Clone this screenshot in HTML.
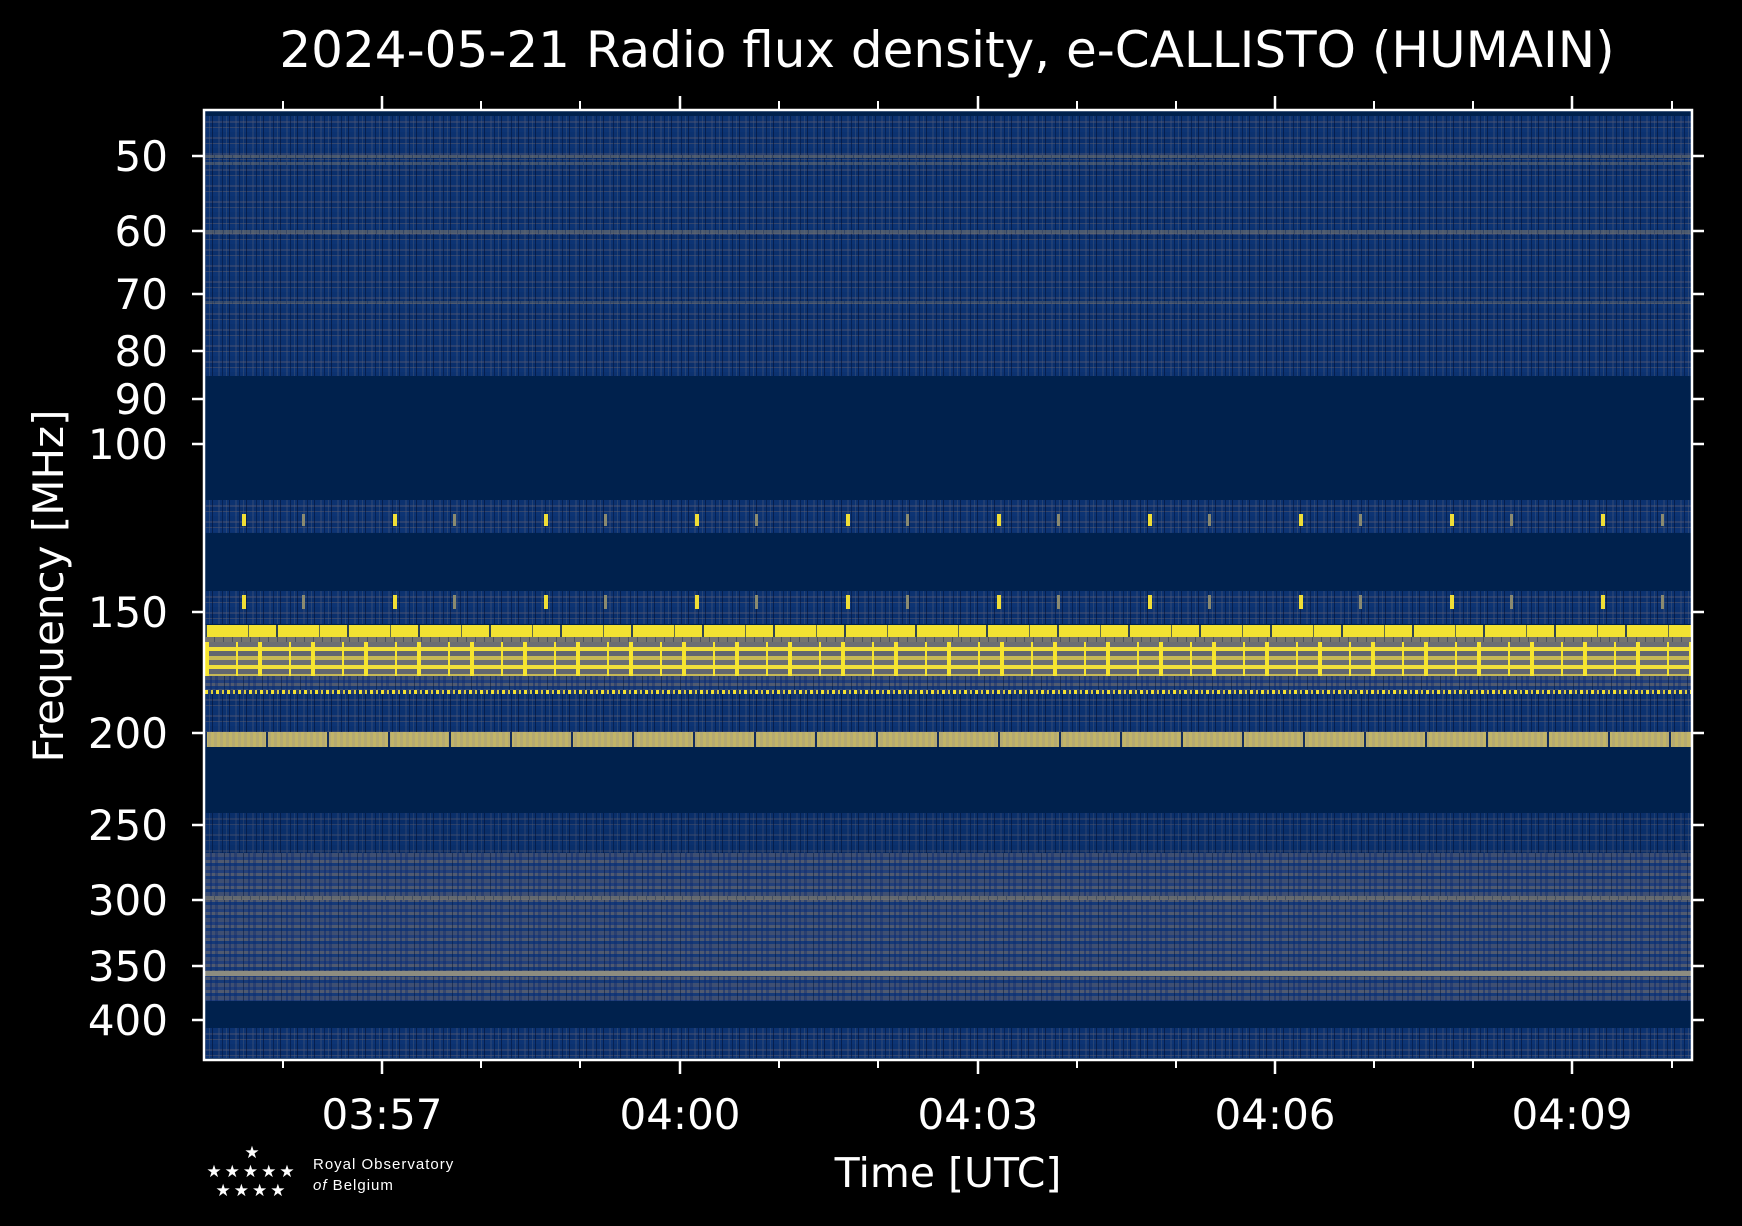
<!DOCTYPE html>
<html><head><meta charset="utf-8"><style>
html,body{margin:0;padding:0;background:#000;}
body{width:1742px;height:1226px;position:relative;overflow:hidden;font-family:"DejaVu Sans","Liberation Sans",sans-serif;color:#fff;}
.plot{position:absolute;left:205px;top:111px;width:1487px;height:949px;background:#00214d;overflow:hidden;}
.b{position:absolute;left:0;width:100%;}
.n{background:
 repeating-linear-gradient(90deg,rgba(0,20,60,.55) 0 1px,transparent 1px 4px,rgba(90,100,120,.35) 4px 5px,transparent 5px 7px,rgba(0,10,40,.5) 7px 8px,transparent 8px 13px,rgba(80,90,120,.3) 13px 15px,transparent 15px 17px),
 repeating-linear-gradient(180deg,#0c3270 0 5px,#2a4170 5px 7px,#0a2f6c 7px 11px,#33466e 11px 12px,#0d3474 12px 16px);}
.g{background:
 repeating-linear-gradient(90deg,rgba(0,20,60,.5) 0 1px,transparent 1px 5px,rgba(10,40,110,.5) 5px 7px,transparent 7px 10px,rgba(10,40,110,.4) 10px 13px,transparent 13px 19px),
 repeating-linear-gradient(180deg,#3f4f72 0 4px,#23407a 4px 7px,#505a70 7px 10px,#163a78 10px 13px);}
.lg{background:repeating-linear-gradient(90deg,rgba(0,20,60,.35) 0 1px,transparent 1px 9px),#757570;}
.y{background:repeating-linear-gradient(90deg,rgba(0,30,90,.8) 0 2px,transparent 2px 43px,rgba(0,30,90,.6) 43px 44px,transparent 44px 71px),#f2e232;}
.yg{background:repeating-linear-gradient(90deg,#f7e52e 0 4px,transparent 4px 31px,#f7e52e 31px 33px,transparent 33px 53px),repeating-linear-gradient(180deg,#6b6e73 0 5px,#f0df3a 5px 9px,#62666f 9px 14px,#c6b856 14px 18px);}
.ys{background:repeating-linear-gradient(90deg,rgba(0,30,90,.9) 0 2px,transparent 2px 61px),repeating-linear-gradient(90deg,#c1b468 0 3px,#b5aa72 3px 6px);}
.spk{background:repeating-linear-gradient(90deg,transparent 0 37px,#f0de36 37px 41px,transparent 41px 97px,#8a8a70 97px 100px,transparent 100px 151px);}
.ydot{background:repeating-linear-gradient(90deg,#f2e232 0 3px,#2b3f6e 3px 6px,#d8cc40 6px 8px,#102f6c 8px 11px);}
</style></head><body>

<div class="plot">
 <div class="b n" style="top:5px;height:260px;"></div>
 <div class="b lg" style="top:44px;height:3px;opacity:.6"></div>
 <div class="b lg" style="top:51px;height:3px;opacity:.5"></div>
 <div class="b lg" style="top:119px;height:4px;opacity:.6"></div>
 <div class="b lg" style="top:190px;height:3px;opacity:.4"></div>
 <div class="b n" style="top:389px;height:33px;"></div>
 <div class="b spk" style="top:403px;height:12px;"></div>
 <div class="b n" style="top:480px;height:33px;"></div>
 <div class="b spk" style="top:484px;height:14px;"></div>
 <div class="b y" style="top:514px;height:12px;"></div>
 <div class="b lg" style="top:526px;height:5px;"></div>
 <div class="b yg" style="top:531px;height:34px;"></div>
 <div class="b g" style="top:565px;height:15px;"></div>
 <div class="b ydot" style="top:579px;height:4px;"></div>
 <div class="b n" style="top:583px;height:38px;"></div>
 <div class="b ys" style="top:621px;height:15px;"></div>
 <div class="b n" style="top:702px;height:40px;opacity:.85"></div>
 <div class="b g" style="top:742px;height:148px;"></div>
 <div class="b lg" style="top:785px;height:4px;opacity:.8"></div>
 <div class="b lg" style="top:860px;height:5px;background:#8d8c80"></div>
 <div class="b n" style="top:917px;height:30px;"></div>
</div>

<svg width="1742" height="1226" style="position:absolute;left:0;top:0" stroke="#fff" stroke-width="2.5" fill="none">
 <text x="947" y="67" fill="#fff" stroke="none" font-family="DejaVu Sans, Liberation Sans, sans-serif" font-size="50" text-anchor="middle">2024-05-21 Radio flux density, e-CALLISTO (HUMAIN)</text>
 <rect x="204" y="110" width="1488" height="950"/>
 <g>
  <line x1="192" y1="156" x2="204" y2="156"/><line x1="1692" y1="156" x2="1704" y2="156"/>
  <line x1="192" y1="231" x2="204" y2="231"/><line x1="1692" y1="231" x2="1704" y2="231"/>
  <line x1="192" y1="294" x2="204" y2="294"/><line x1="1692" y1="294" x2="1704" y2="294"/>
  <line x1="192" y1="351" x2="204" y2="351"/><line x1="1692" y1="351" x2="1704" y2="351"/>
  <line x1="192" y1="399" x2="204" y2="399"/><line x1="1692" y1="399" x2="1704" y2="399"/>
  <line x1="192" y1="444" x2="204" y2="444"/><line x1="1692" y1="444" x2="1704" y2="444"/>
  <line x1="192" y1="612" x2="204" y2="612"/><line x1="1692" y1="612" x2="1704" y2="612"/>
  <line x1="192" y1="733" x2="204" y2="733"/><line x1="1692" y1="733" x2="1704" y2="733"/>
  <line x1="192" y1="825" x2="204" y2="825"/><line x1="1692" y1="825" x2="1704" y2="825"/>
  <line x1="192" y1="900" x2="204" y2="900"/><line x1="1692" y1="900" x2="1704" y2="900"/>
  <line x1="192" y1="966" x2="204" y2="966"/><line x1="1692" y1="966" x2="1704" y2="966"/>
  <line x1="192" y1="1020" x2="204" y2="1020"/><line x1="1692" y1="1020" x2="1704" y2="1020"/>
 </g>
 <g>
  <line x1="382" y1="1060" x2="382" y2="1074"/><line x1="382" y1="96" x2="382" y2="110"/>
  <line x1="680" y1="1060" x2="680" y2="1074"/><line x1="680" y1="96" x2="680" y2="110"/>
  <line x1="978" y1="1060" x2="978" y2="1074"/><line x1="978" y1="96" x2="978" y2="110"/>
  <line x1="1275" y1="1060" x2="1275" y2="1074"/><line x1="1275" y1="96" x2="1275" y2="110"/>
  <line x1="1572" y1="1060" x2="1572" y2="1074"/><line x1="1572" y1="96" x2="1572" y2="110"/>
  <g stroke-width="2">
  <line x1="283" y1="1060" x2="283" y2="1068"/><line x1="283" y1="101" x2="283" y2="110"/>
  <line x1="481" y1="1060" x2="481" y2="1068"/><line x1="481" y1="101" x2="481" y2="110"/>
  <line x1="580" y1="1060" x2="580" y2="1068"/><line x1="580" y1="101" x2="580" y2="110"/>
  <line x1="779" y1="1060" x2="779" y2="1068"/><line x1="779" y1="101" x2="779" y2="110"/>
  <line x1="878" y1="1060" x2="878" y2="1068"/><line x1="878" y1="101" x2="878" y2="110"/>
  <line x1="1077" y1="1060" x2="1077" y2="1068"/><line x1="1077" y1="101" x2="1077" y2="110"/>
  <line x1="1176" y1="1060" x2="1176" y2="1068"/><line x1="1176" y1="101" x2="1176" y2="110"/>
  <line x1="1374" y1="1060" x2="1374" y2="1068"/><line x1="1374" y1="101" x2="1374" y2="110"/>
  <line x1="1473" y1="1060" x2="1473" y2="1068"/><line x1="1473" y1="101" x2="1473" y2="110"/>
  <line x1="1672" y1="1060" x2="1672" y2="1068"/><line x1="1672" y1="101" x2="1672" y2="110"/>
  </g>
 </g>
 <g fill="#fff" stroke="none" font-family="DejaVu Sans, Liberation Sans, sans-serif" font-size="42" text-anchor="end">
  <text x="168" y="171">50</text><text x="168" y="246">60</text><text x="168" y="309">70</text>
  <text x="168" y="366">80</text><text x="168" y="414">90</text><text x="168" y="459">100</text>
  <text x="168" y="627">150</text><text x="168" y="748">200</text><text x="168" y="840">250</text>
  <text x="168" y="915">300</text><text x="168" y="981">350</text><text x="168" y="1035">400</text>
 </g>
 <g fill="#fff" stroke="none" font-family="DejaVu Sans, Liberation Sans, sans-serif" font-size="42" text-anchor="middle">
  <text x="382" y="1129">03:57</text><text x="680" y="1129">04:00</text><text x="978" y="1129">04:03</text>
  <text x="1275" y="1129">04:06</text><text x="1572" y="1129">04:09</text>
  <text x="948" y="1187" font-size="41">Time [UTC]</text>
  <text transform="translate(63,586) rotate(-90)">Frequency [MHz]</text>
 </g>
 <g fill="#fff" stroke="none" font-size="17" font-family="Liberation Sans, sans-serif">
  <text x="252" y="1158" text-anchor="middle">★</text>
  <text x="252" y="1177" text-anchor="middle" letter-spacing="3">★★★★★</text>
  <text x="252" y="1196" text-anchor="middle" letter-spacing="3">★★★★</text>
  <text x="313" y="1169" font-size="15" letter-spacing="1">Royal Observatory</text>
  <text x="313" y="1190" font-size="15" letter-spacing="1"><tspan font-style="italic">of</tspan> Belgium</text>
 </g>
</svg>
</body></html>
